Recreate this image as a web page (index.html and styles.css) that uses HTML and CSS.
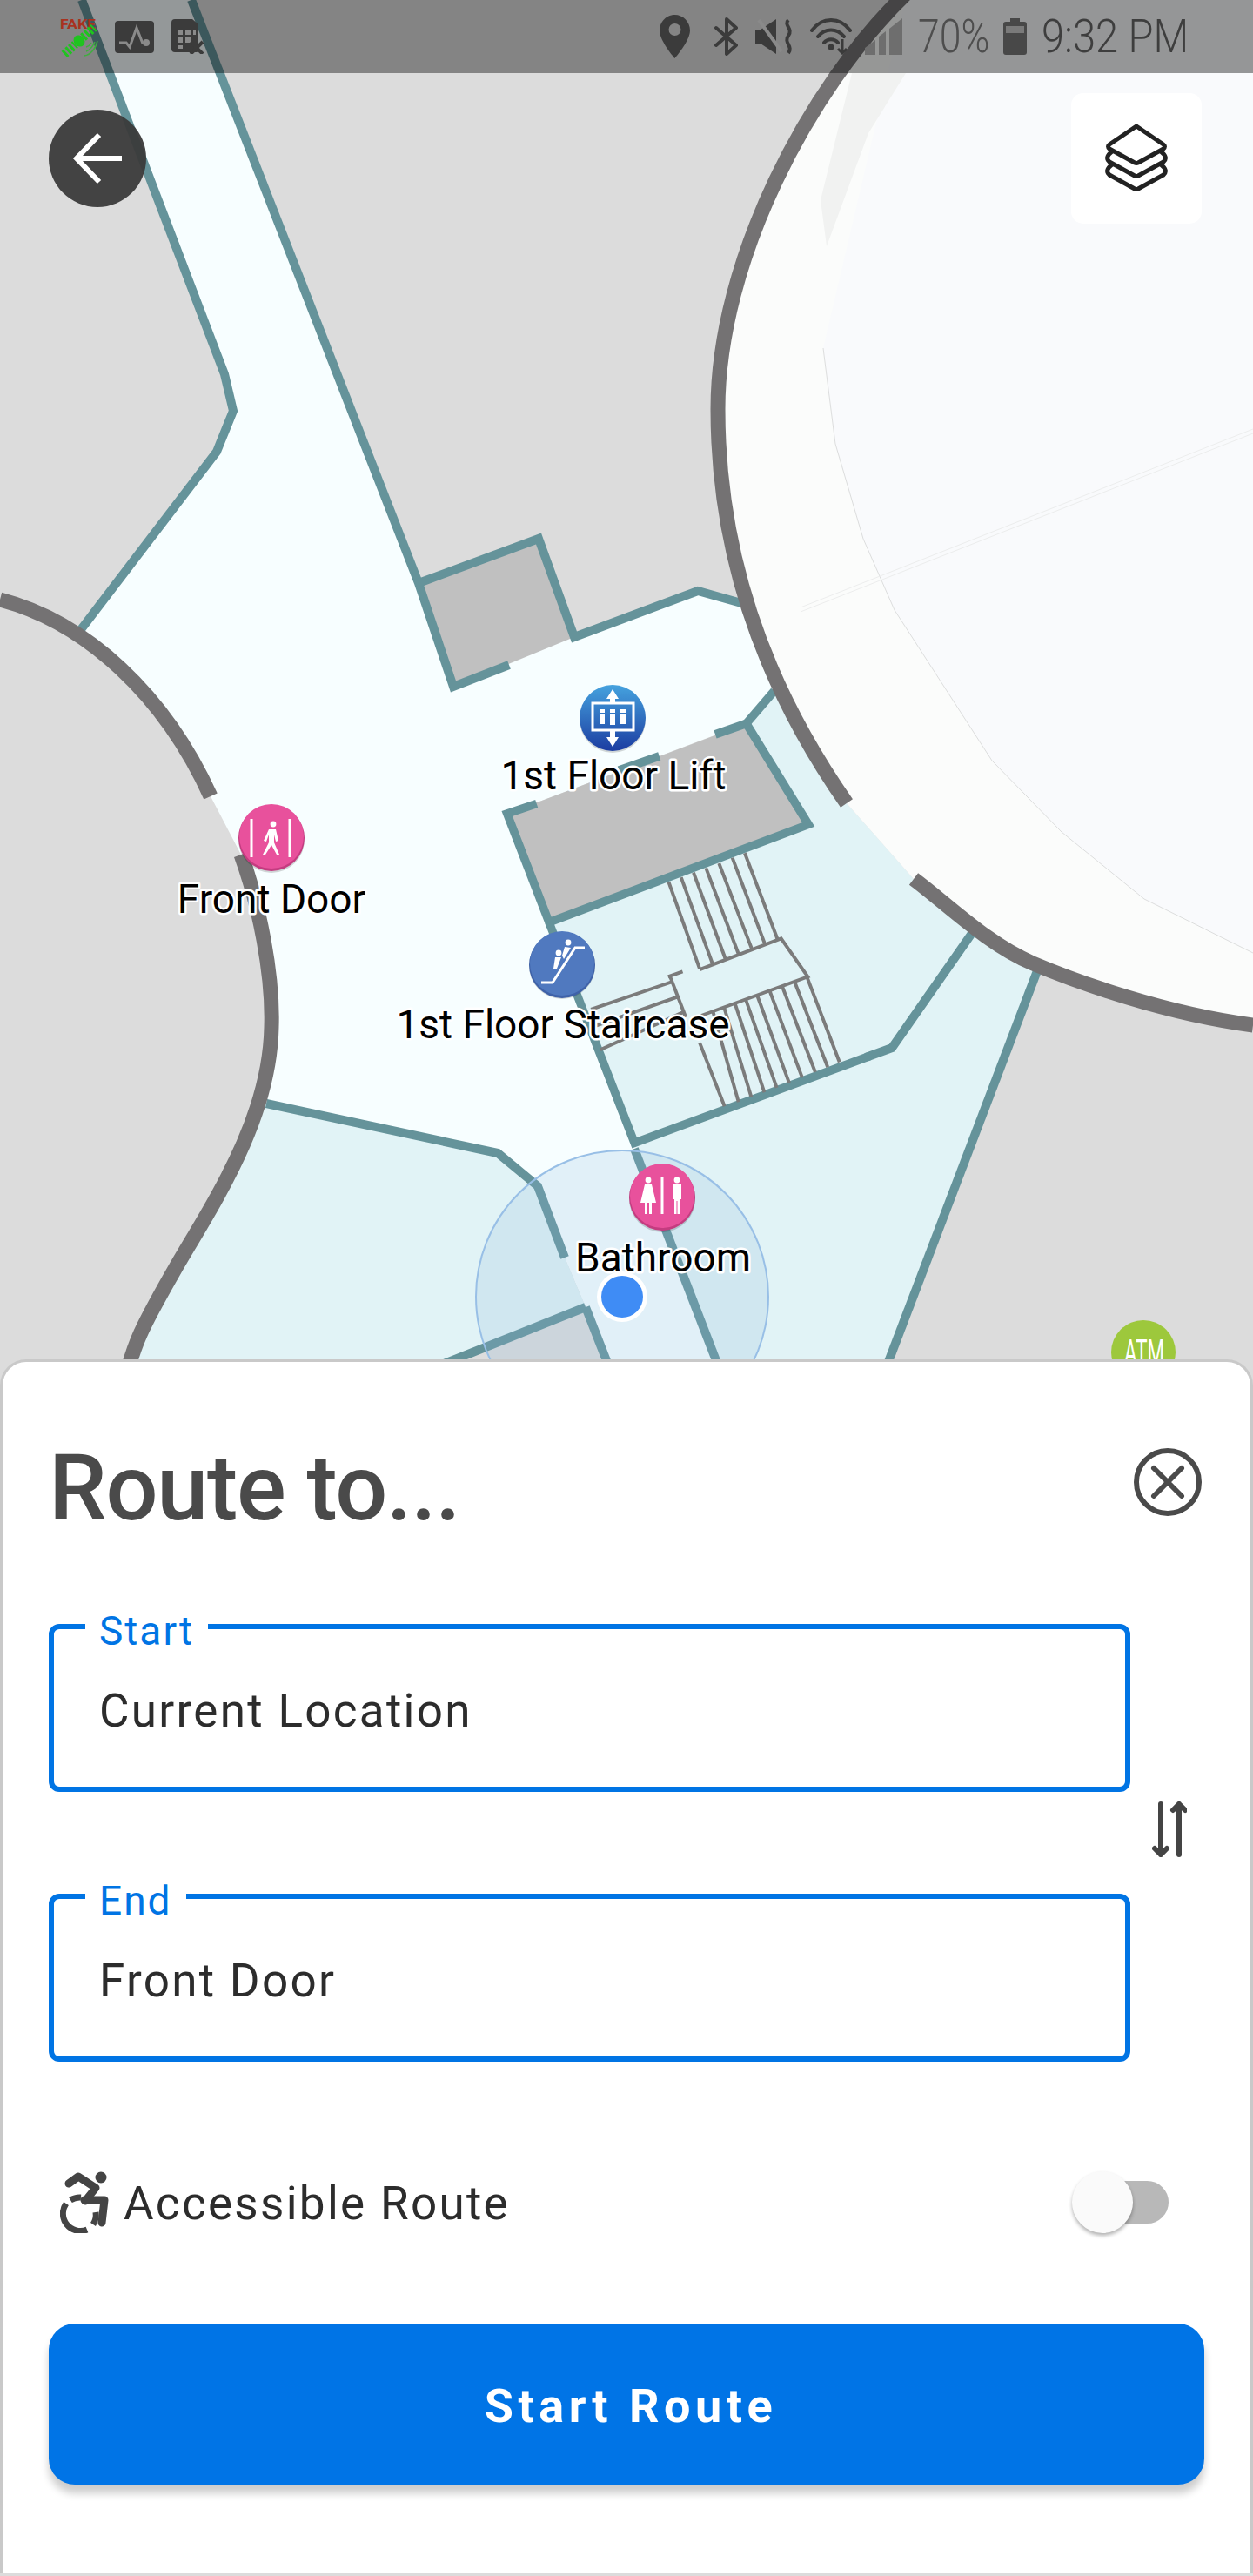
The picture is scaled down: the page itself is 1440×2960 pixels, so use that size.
FILE: index.html
```html
<!DOCTYPE html>
<html lang="en">
<head>
  <meta charset="UTF-8" />
  <title>Route to...</title>
  <link rel="stylesheet" href="styles.css">
</head>
<body>
<div class="screen">

  <!-- indoor map, drawn on its own canvas behind everything -->
  <svg class="map" width="1440" height="1600" viewBox="0 0 1440 1600">
    <defs>
      <linearGradient id="liftBlue" x1="0" y1="0" x2="0" y2="1">
        <stop offset="0" stop-color="#45a2de" />
        <stop offset="1" stop-color="#1c3da1" />
      </linearGradient>
    </defs>

    <!-- floors -->
    <path class="floor" d="M94 0 L220 0 L481 670 L660 732 L802 679 L870 700 L890 794 L858 831 L583 935 L631 1060 L729 1314 L824 1570 L698 1570 L673 1502 L649 1445 L618 1363 L572 1325 L307 1268 C310 1240 314 1200 312 1180 C314 1120 298 1040 277 982 L242 915 C190 800 100 715 91 726 L249 519 L268 472 L258 430 Z" />
    <path class="room" d="M631 1060 L929 947 L858 831 L890 794 L900 770 L973 923 L1050 1010 L1120 1068 L1193 1113 L1019 1570 L824 1570 L729 1314 Z" />
    <path class="room" d="M307 1268 L572 1325 L618 1363 L649 1445 L673 1502 L698 1570 L148 1570 C155 1545 160 1530 200 1460 C240 1390 310 1290 312 1180 Z" />
    <path class="hole" d="M673 1502 L698 1570 L503 1570 Z" />

    <!-- big round building on the right -->
    <path class="building" d="M1040 -6 C930 100 825 300 825 470 C825 640 880 790 973 923 L1050 1010 C1090 1040 1135 1085 1187 1107 S1340 1165 1440 1178 V-6 Z" />
    <path class="building-inner" d="M946 400 L960 510 L992 619 L1028 701 L1140 874 L1220 956 L1315 1033 L1440 1095 V0 H1040 Z" />
    <path class="building-shade" d="M1041 84 L998 153 L950 283 L943 230 L979 84 Z" />
    <polyline class="hairline" points="946 400 960 510 992 619 1028 701 1140 874 1220 956 1315 1033 1440 1095" />
    <path class="hairline-soft" d="M920 698 L1440 493 M920 703 L1440 498" />

    <!-- rooms and walls -->
    <path class="store" d="M481 670 L619 619 L660 732 L521 789 Z" />
    <polyline class="wall" points="94 0 258 430 268 472 249 519 91 726" />
    <polyline class="wall" points="220 0 481 670 521 789 585 764" />
    <polyline class="wall" points="481 670 619 619 660 732 802 679 852 693" />
    <polyline class="wall" points="306 1268 572 1325 618 1363 649 1445" />
    <polyline class="wall" points="673 1502 698 1566" />
    <polyline class="wall" points="673 1502 503 1570" />
    <polyline class="wall" points="729 1320 824 1566" />
    <polyline class="wall" points="1193 1113 1019 1570" />
    <polyline class="wall" points="995 1215 1025 1204 1120 1068" />

    <g transform="translate(440 760) scale(.357)">
      <path class="store" d="M400 490 L1170 200 L1370 525 L535 840 Z" />
      <polyline class="wall-fine" points="495 458 400 490 535 840 1370 525 1170 200 1070 235" />
      <polyline class="wall-fine" points="760 350 890 305" />
      <polyline class="wall-fine" points="1170 200 1260 95" />
      <polyline class="wall-fine" points="535 840 810 1550 1568 1270" />

      <!-- stairs -->
      <path class="stair" d="M920 710 L1020 990 M960 695 L1062 975 M1000 680 L1103 958 M1040 665 L1145 942 M1082 650 L1188 926 M1125 632 L1230 910 M1165 617 L1270 893" />
      <path class="stair" d="M1020 992 L1282 892 L1368 1015 L1025 1140" />
      <path class="stair" d="M1020 1228 L1100 1432 M1062 1125 L1145 1418 M1098 1112 L1186 1402 M1133 1100 L1228 1387 M1168 1088 L1268 1372 M1205 1075 L1308 1357 M1245 1060 L1350 1340 M1285 1045 L1392 1322 M1325 1030 L1432 1306 M1365 1015 L1470 1290" />
      <path class="stair" d="M918 1015 L965 998 M925 1015 L975 1145 M935 1030 L670 1120 M948 1080 L680 1175 M965 1130 L700 1250" />
    </g>

    <!-- dark outer walls -->
    <path class="shell" d="M0 689 C100 715 190 800 242 915" />
    <path class="shell" d="M277 982 C298 1040 314 1120 312 1180 C310 1290 240 1390 200 1460 C160 1530 155 1545 148 1570" />
    <path class="shell" d="M1040 -6 C930 100 825 300 825 470 C825 640 880 790 973 923" />
    <path class="shell" d="M1050 1010 C1090 1040 1135 1085 1187 1107 S1340 1165 1440 1178" />

    <!-- location accuracy -->
    <circle class="accuracy" cx="715" cy="1490" r="168" />

    <!-- lift -->
    <circle class="pin-shadow" cx="704" cy="827" r="38" />
    <circle cx="704" cy="825" r="38" fill="url(#liftBlue)" />
    <rect class="glyph-line" x="681" y="808" width="47" height="31" />
    <path class="glyph" d="M704 792 L711 803 H707 V808 H701 V803 H697 Z M704 858 L711 847 H707 V839 H701 V847 H697 Z" />
    <path class="glyph" d="M689 815 h6 v4 h-6 Z M689 821 h6 v11 h-6 Z M701 815 h6 v4 h-6 Z M701 821 h6 v12 h-6 Z M713 815 h6 v4 h-6 Z M713 821 h6 v11 h-6 Z" />

    <!-- staircase -->
    <circle class="pin-shadow" cx="646" cy="1110" r="38" />
    <circle class="pin-stairs-edge" cx="646" cy="1109" r="38" />
    <circle class="pin-stairs" cx="646" cy="1107" r="37" />
    <polyline class="glyph-line" points="622 1129 635 1129 661 1089 672 1089" />
    <circle class="glyph" cx="653" cy="1083" r="3.4" />
    <circle class="glyph" cx="642" cy="1095" r="3.4" />
    <path class="glyph" d="M649 1088 L656 1089 L648 1102 L646 1098 Z M638 1100 L645 1100 L640 1113 L636 1113 Z" />

    <!-- front door -->
    <circle class="pin-shadow" cx="312" cy="965" r="38" />
    <circle class="pin-pink-edge" cx="312" cy="963" r="38" />
    <circle class="pin-pink" cx="312" cy="961" r="37" />
    <path class="glyph-line" d="M289 941 V985 M333 941 V985" />
    <circle class="glyph" cx="314" cy="947" r="3.4" />
    <path class="glyph" d="M309 953 H317 L320 966 L317 967 L315 959 V968 L321 982 H318 L312 971 L305 982 H302 L309 968 V959 L306 967 L303 966 Z" />

    <!-- bathroom -->
    <circle class="pin-shadow" cx="761" cy="1378" r="38" />
    <circle class="pin-pink-edge" cx="761" cy="1376" r="38" />
    <circle class="pin-pink" cx="761" cy="1374" r="37" />
    <path class="glyph-line" d="M761 1353 V1395" />
    <circle class="glyph" cx="745" cy="1356" r="3.4" />
    <circle class="glyph" cx="778" cy="1356" r="3.4" />
    <path class="glyph" d="M741 1361 H749 L754 1382 H749 V1395 H746 V1382 H744 V1395 H741 V1382 H736 Z" />
    <path class="glyph" d="M773 1361 H783 V1378 H781 V1395 H778.500 V1380 H777.500 V1395 H775 V1378 H773 Z" />

    <!-- atm, mostly behind the panel -->
    <circle class="pin-atm" cx="1314" cy="1554" r="37" />
    <text class="pin-atm-text" x="1292" y="1568" textLength="46" lengthAdjust="spacingAndGlyphs">ATM</text>

    <text class="map-label" x="705" y="907">1st Floor Lift</text>
    <text class="map-label" x="647" y="1193">1st Floor Staircase</text>
    <text class="map-label" x="312" y="1049">Front Door</text>
    <text class="map-label" x="762" y="1461">Bathroom</text>

    <circle class="dot-ring" cx="715" cy="1490" r="29" />
    <circle class="dot" cx="715" cy="1490" r="24" />
  </svg>

  <div class="statusbar">
    <div class="status-group">
      <svg class="status-fake" width="48" height="50" viewBox="0 0 48 50">
        <text class="fake-text" x="1" y="16" textLength="41" lengthAdjust="spacingAndGlyphs">FAKE</text>
        <g transform="rotate(-42 23 30)">
          <line class="sat-panel" x1="0" y1="30" x2="17" y2="30" />
          <line class="sat-panel" x1="29" y1="30" x2="46" y2="30" />
          <ellipse class="sat-body" cx="23" cy="30" rx="6" ry="7" />
        </g>
        <path class="sat-wave" d="M29 47 C36 46 42 39 44 30 M31 42 C36 40 39 36 41 31 M31 37 C34 36 36 34 37 32" />
      </svg>
      <svg class="status-pulse" width="45" height="37" viewBox="0 0 45 37">
        <rect class="icon-dark" width="45" height="37" rx="4" />
        <polyline class="pulse" points="5 25 13 25 17 30 25 8 32 26" />
        <circle class="pulse-dot" cx="36" cy="25" r="4" />
      </svg>
      <svg width="38" height="40" viewBox="0 0 38 40">
        <path class="icon-dark" d="M4 0 H24 L31 6 V36 Q31 38 29 38 H4 Q0 38 0 34 V4 Q0 0 4 0 Z" />
        <path class="sim-holes" d="M7 12 h6 v6 h-6 Z M16 12 h6 v6 h-6 Z M25 12 h3 v6 h-3 Z M7 21 h6 v6 h-6 Z M16 21 h6 v6 h-6 Z M7 30 h6 v4 h-6 Z" />
        <path class="sim-x" d="M22 26 L36 40 M36 26 L22 40" />
      </svg>
    </div>
    <div class="status-group status-right">
      <svg class="status-pin" width="35" height="50" viewBox="0 0 35 50">
        <path class="icon-dark" fill-rule="evenodd" d="M17.500 0 C8 0 0 8 0 18 C0 30 17.500 50 17.500 50 C17.500 50 35 30 35 18 C35 8 27 0 17.500 0 Z M17.500 10 A7 7 0 1 1 17.500 24 A7 7 0 1 1 17.500 10 Z" />
      </svg>
      <svg class="status-bt" width="28" height="44" viewBox="0 0 28 44">
        <path class="icon-stroke" d="M2 12 L25 32 L14 42 V2 L25 12 L2 32" />
      </svg>
      <svg class="status-mute" width="45" height="42" viewBox="0 0 45 42">
        <path class="icon-dark" d="M0 13 H6 L24 1 V41 L6 29 H0 Z" />
        <path class="mute-slash" d="M4 2 L30 38" />
        <path class="mute-wave" d="M38 2 C32 8 44 12 38 20 C32 28 44 32 38 40" />
      </svg>
      <svg class="status-wifi" width="48" height="42" viewBox="0 0 48 42">
        <path class="icon-wifi" d="M2 14 C14 -2 34 -2 46 14 M9 21 C17 11 31 11 39 21 M16 28 C20 23 28 23 32 28" />
        <circle class="icon-dark" cx="24" cy="33" r="3.500" />
        <path class="icon-arrow" d="M37 24 V40 M32 35 L37 40 L42 35" />
      </svg>
      <svg class="status-signal" width="46" height="42" viewBox="0 0 46 42">
        <path class="signal-off" d="M31 12 L46 0 V42 H31 Z M19 21 L27 15 V42 H19 Z M3 34 L15 25 V42 H3 Z" />
      </svg>
      <span class="status-pct">70%</span>
      <svg class="status-battery" width="27" height="42" viewBox="0 0 27 42">
        <path class="icon-batt" d="M8 0 H19 V4 H24 Q27 4 27 7 V39 Q27 42 24 42 H3 Q0 42 0 39 V7 Q0 4 3 4 H8 Z" />
        <rect class="batt-empty" x="3" y="9" width="21" height="8" />
      </svg>
      <span class="status-time">9:32 PM</span>
    </div>
  </div>

  <div class="toolbar">
    <div class="back-btn">
      <svg width="112" height="112" viewBox="0 0 112 112">
        <path class="back-arrow" d="M84 56 H32 M58 29 L32 56 L58 83" />
      </svg>
    </div>
    <div class="layers-btn">
      <svg width="72" height="82" viewBox="0 0 72 82">
        <path class="layers-line" d="M36 4 L67 25 Q70 27 67 30 L38 46 Q36 47 34 46 L5 30 Q2 27 5 25 Z" />
        <path class="layers-line" d="M8 33 Q-1 40 5 45 L34 61 Q36 62 38 61 L67 45 Q73 40 64 33" />
        <path class="layers-line" d="M8 48 Q-1 55 5 60 L34 76 Q36 77 38 76 L67 60 Q73 55 64 48" />
      </svg>
    </div>
  </div>

  <div class="panel">
    <div class="panel-head">
      <h1 class="panel-title">Route to...</h1>
      <svg class="close-icon" width="78" height="78" viewBox="0 0 78 78">
        <circle class="close-line" cx="39" cy="39" r="36" />
        <path class="close-line round" d="M23 23 L55 55 M55 23 L23 55" />
      </svg>
    </div>

    <div class="fields-row">
      <div class="fields">
        <div class="field">
          <span class="field-label">Start</span>
          <span class="field-value">Current Location</span>
        </div>
        <div class="field">
          <span class="field-label">End</span>
          <span class="field-value">Front Door</span>
        </div>
      </div>
      <svg class="swap-icon" width="40" height="64" viewBox="0 0 40 64">
        <path class="swap-line" d="M10 3 V61 M3 54 L10 61 L17 54 M31 61 V3 M24 10 L31 3 L38 10" />
      </svg>
    </div>

    <div class="option-row">
      <svg class="a11y-icon" width="56" height="71" viewBox="0 0 56 71">
        <circle class="a11y-fill" cx="47" cy="7" r="6.500" />
        <path class="a11y-body" d="M10 14 L21 6 L41 19 L29 34" />
        <path class="a11y-body" d="M28 33 H51 L48 59" />
        <path class="a11y-wheel" d="M7 37 A20 20 0 0 0 31 67" />
        <path class="a11y-wheel" d="M12 33 A20 20 0 0 1 24 30" />
        <path class="a11y-wheel" d="M38 61 A20 20 0 0 0 41 47" />
      </svg>
      <span class="option-text">Accessible Route</span>
      <div class="toggle"><span class="toggle-knob"></span></div>
    </div>

    <button class="start-btn" type="button">Start Route</button>
  </div>
</div>
</body>
</html>
```

FILE: styles.css
```css
* {
  box-sizing: border-box;
}
body {
  margin: 0;
  background-color: #dcdcdc;
  font-family: Roboto, "Liberation Sans", sans-serif;
}
.screen {
  position: relative;
  width: 1440px;
  height: 2960px;
  overflow: hidden;
  display: flex;
  flex-direction: column;
}

/* map */
.map {
  position: absolute;
  left: 0;
  top: 0;
}
.floor { fill: #f7feff; }
.room { fill: #e1f3f6; }
.hole { fill: #dddddd; }
.building { fill: #fbfcfb; }
.building-inner { fill: #f9fafc; }
.building-shade { fill: #f1f2f1; }
.hairline {
  fill: none;
  stroke: #dcdddd;
  stroke-width: 1;
}
.hairline-soft {
  fill: none;
  stroke: #eceded;
  stroke-width: 1;
}
.store { fill: #c0c0c0; }
.wall, .wall-fine {
  fill: none;
  stroke: #65939a;
  stroke-width: 10;
  stroke-linejoin: miter;
}
.wall-fine { stroke-width: 27; }
.stair {
  fill: none;
  stroke: #7b7b7b;
  stroke-width: 11;
}
.shell {
  fill: none;
  stroke: #747273;
  stroke-width: 17;
}
.accuracy {
  fill: rgba(140, 185, 220, 0.2);
  stroke: #98bfe6;
  stroke-width: 2;
}
.pin-shadow { fill: rgba(0, 0, 0, 0.16); }
.pin-stairs { fill: #5079bf; }
.pin-stairs-edge { fill: #3f62a8; }
.pin-pink { fill: #e8519c; }
.pin-pink-edge { fill: #c43c80; }
.pin-atm { fill: #9dc83c; }
.pin-atm-text {
  font-size: 40px;
  fill: #ffffff;
}
.glyph { fill: #ffffff; }
.glyph-line {
  fill: none;
  stroke: #ffffff;
  stroke-width: 3;
}
.map-label {
  font-size: 46px;
  fill: #000000;
  stroke: #ffffff;
  stroke-width: 5px;
  stroke-linejoin: round;
  paint-order: stroke;
  text-anchor: middle;
}
.dot { fill: #3f8cf5; }
.dot-ring { fill: #ffffff; }

/* status bar */
.statusbar {
  position: relative;
  height: 84px;
  flex-shrink: 0;
  background: rgba(0, 0, 0, 0.4);
  display: flex;
  justify-content: space-between;
  align-items: center;
  padding: 0 77px 0 68px;
}
.status-group {
  display: flex;
  align-items: center;
  gap: 20px;
}
.status-right {
  gap: 0;
}
.status-pulse { margin-left: -4px; }
.status-bt { margin-left: 28px; }
.status-mute { margin-left: 19px; }
.status-wifi { margin-left: 18px; }
.status-signal { margin-left: 12px; }
.status-pct {
  margin-left: 18px;
  width: 82px;
  font-size: 53px;
  font-weight: 300;
  color: #4e4e4e;
  transform: scaleX(0.84);
  transform-origin: left;
  white-space: nowrap;
}
.status-battery { margin-left: 16px; }
.status-time {
  margin-left: 17px;
  width: 166px;
  font-size: 53px;
  font-weight: 300;
  color: #3e3e3e;
  transform: scaleX(0.887);
  transform-origin: left;
  white-space: nowrap;
}
.fake-text {
  font-size: 15px;
  font-weight: 700;
  fill: #a8321f;
}
.sat-panel {
  stroke: #1fc41f;
  stroke-width: 10;
  stroke-dasharray: 3 2;
}
.sat-body { fill: #1fc41f; }
.sat-wave {
  fill: none;
  stroke: #3fae3f;
  stroke-width: 1.500;
}
.icon-dark { fill: #3b3b3b; }
.icon-stroke {
  fill: none;
  stroke: #3b3b3b;
  stroke-width: 4;
  stroke-linejoin: round;
  stroke-linecap: round;
}
.pulse {
  fill: none;
  stroke: #8a8a8a;
  stroke-width: 3;
}
.pulse-dot { fill: #8a8a8a; }
.sim-holes { fill: #8a8a8a; }
.sim-x {
  fill: none;
  stroke: #3b3b3b;
  stroke-width: 4;
}
.mute-slash {
  fill: none;
  stroke: #8a8a8a;
  stroke-width: 4;
}
.mute-wave {
  fill: none;
  stroke: #3b3b3b;
  stroke-width: 4;
}
.icon-wifi {
  fill: none;
  stroke: #3b3b3b;
  stroke-width: 4;
  stroke-linecap: round;
}
.icon-arrow {
  fill: none;
  stroke: #3b3b3b;
  stroke-width: 3;
}
.signal-off { fill: #6e6e6e; }
.icon-batt { fill: #484848; }
.batt-empty { fill: #7a7a7a; }

/* map buttons */
.toolbar {
  position: relative;
  display: flex;
  justify-content: space-between;
  align-items: flex-start;
  padding: 23px 59px 0 56px;
}
.back-btn {
  width: 112px;
  height: 112px;
  margin-top: 19px;
  border-radius: 50%;
  background: rgba(58, 58, 58, 0.95);
}
.back-arrow {
  fill: none;
  stroke: #ffffff;
  stroke-width: 6;
}
.layers-btn {
  width: 150px;
  height: 150px;
  border-radius: 14px;
  background: #ffffff;
  display: flex;
  align-items: center;
  justify-content: center;
}
.layers-line {
  fill: none;
  stroke: #222222;
  stroke-width: 5;
  stroke-linejoin: round;
}

/* route panel */
.panel {
  position: relative;
  margin-top: auto;
  margin-bottom: 4px;
  height: 1394px;
  background: #ffffff;
  border: 3px solid #c9c9c9;
  border-bottom: none;
  border-radius: 30px 30px 0 0;
  padding: 92px 53px 0 53px;
}
.panel-head {
  display: flex;
  justify-content: space-between;
  align-items: center;
}
.panel-title {
  margin: 0;
  font-size: 106px;
  line-height: 106px;
  font-weight: 500;
  letter-spacing: -1.300px;
  color: #4a4a4a;
}
.close-icon {
  margin-right: 3px;
  margin-bottom: 14px;
}
.close-line {
  fill: none;
  stroke: #4a4a4a;
  stroke-width: 6;
}
.close-line.round {
  stroke-linecap: round;
}
.fields-row {
  display: flex;
  margin-top: 103px;
}
.fields {
  width: 1243px;
  display: flex;
  flex-direction: column;
  gap: 117px;
}
.field {
  position: relative;
  height: 193px;
  border: 6px solid #0074e4;
  border-radius: 12px;
  padding: 7px 0 0 52px;
  display: flex;
  align-items: center;
}
.field-label {
  position: absolute;
  left: 36px;
  top: -20px;
  padding: 0 16px;
  background: #ffffff;
  font-size: 46px;
  line-height: 44px;
  letter-spacing: 2px;
  color: #0074e4;
}
.field-value {
  font-size: 53px;
  letter-spacing: 2.300px;
  color: #2c2c2c;
}
.swap-icon {
  align-self: center;
  margin-left: 25px;
  margin-bottom: 32px;
}
.swap-line {
  fill: none;
  stroke: #444444;
  stroke-width: 6;
  stroke-linecap: round;
}
.option-row {
  display: flex;
  align-items: center;
  margin-top: 126px;
  padding-left: 13px;
}
.a11y-fill { fill: #444444; }
.a11y-body {
  fill: none;
  stroke: #444444;
  stroke-width: 9;
  stroke-linejoin: round;
  stroke-linecap: round;
}
.a11y-wheel {
  fill: none;
  stroke: #444444;
  stroke-width: 7;
}
.option-text {
  margin-left: 17px;
  padding-top: 3px;
  font-size: 53px;
  letter-spacing: 2.300px;
  color: #2c2c2c;
}
.toggle {
  position: relative;
  margin-left: auto;
  margin-right: 41px;
  width: 111px;
  height: 49px;
  display: flex;
  justify-content: flex-end;
}
.toggle::before {
  content: "";
  width: 90px;
  height: 49px;
  border-radius: 25px;
  background: #b8b8b8;
}
.toggle-knob {
  position: absolute;
  left: 0;
  top: -11px;
  width: 70px;
  height: 71px;
  border-radius: 50%;
  background: #fafafa;
  box-shadow: 0 3px 4px rgba(0, 0, 0, 0.3);
}
.start-btn {
  display: block;
  width: 100%;
  height: 185px;
  margin-top: 104px;
  padding: 4px 0 0 10px;
  border: none;
  border-radius: 30px;
  background: #0074e6;
  color: #ffffff;
  font-family: Roboto, "Liberation Sans", sans-serif;
  font-size: 54px;
  font-weight: 700;
  letter-spacing: 5.500px;
  box-shadow: 0 10px 10px rgba(0, 0, 0, 0.2);
}
```
